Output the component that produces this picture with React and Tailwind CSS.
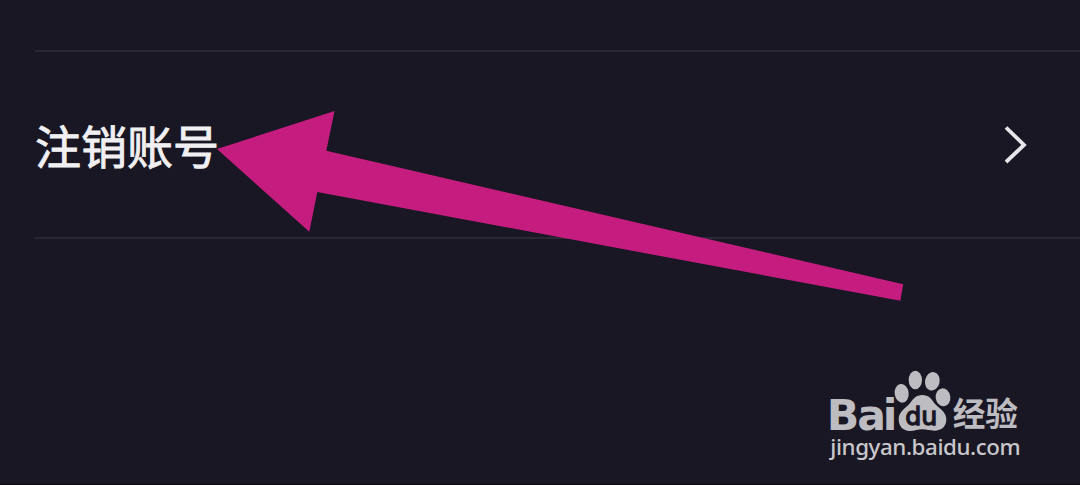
const Divider = () => <div className="ml-[35px] h-[2px] bg-[#2a2833]" />

const Arrow = () => (
    <svg
        className="absolute left-[210px] top-[100px]"
        width="700"
        height="210"
        viewBox="210 100 700 210"
        fill="#c51d7f"
    >
        <path d="M217 149L334.5 111L326.3 150.7L903.2 284.2L900.3 300.8L317.3 192L309.3 231.8Z" />
    </svg>
)

const Watermark = () => (
    <svg
        className="absolute left-[820px] top-[360px]"
        width="210"
        height="110"
        viewBox="0 0 630 330"
        fill="#bdbcc0"
    >
        <text x="20 112 188" y="209" fontSize="128" fontWeight="700" className="font-['DejaVu_Sans']">Bai</text>
        <ellipse cx="245" cy="100" rx="21" ry="28" transform="rotate(-8 245 100)" />
        <ellipse cx="286" cy="60" rx="20" ry="28" />
        <ellipse cx="337" cy="64" rx="22" ry="28" transform="rotate(12 337 64)" />
        <ellipse cx="369" cy="112" rx="22" ry="27" transform="rotate(-8 369 112)" />
        <path d="M307 105C325 105 334 116 342 128C353 142 379 154 379 178C379 200 365 212 343 212C329 212 321 208 307 208C294 208 284 213 270 213C248 213 236 198 236 177C236 154 260 142 271 128C280 116 289 105 307 105Z" />
        <text x="256 304" y="194" fontSize="76" fill="#1a1724" stroke="#1a1724" strokeWidth="4" className="font-['DejaVu_Sans']">du</text>
        <text x="398" y="199" fontSize="98" fontWeight="700" textLength="196" lengthAdjust="spacingAndGlyphs" className="font-['Noto_Sans_CJK_SC',sans-serif]">经验</text>
        <text x="31" y="284" fontSize="67" fontWeight="500" textLength="571" lengthAdjust="spacing" fill="#c8c7cb" className="font-['Noto_Sans']">jingyan.baidu.com</text>
    </svg>
)

const App = () => {
    return (
        <div className="relative h-[485px] w-[1080px] overflow-hidden border-b border-[#0e0710] bg-[#1a1724] pt-[50px]">
            <Divider />
            <div className="flex h-[185px] items-center justify-between pl-[35px] pr-[52px]">
                <span className="relative bottom-[1px] font-['Noto_Sans_CJK_SC',sans-serif] text-[46px] leading-none text-[#f0f0f2] [-webkit-text-stroke:0.9px_#f0f0f2]">注销账号</span>
                <svg width="24" height="40" viewBox="0 0 24 40" fill="none" stroke="#e6e6e9" strokeWidth="3.8" className="relative bottom-[1px]">
                    <path d="M2 3.5L20 21L2 38" />
                </svg>
            </div>
            <Divider />
            <Arrow />
            <Watermark />
        </div>
    )
}

export default App
